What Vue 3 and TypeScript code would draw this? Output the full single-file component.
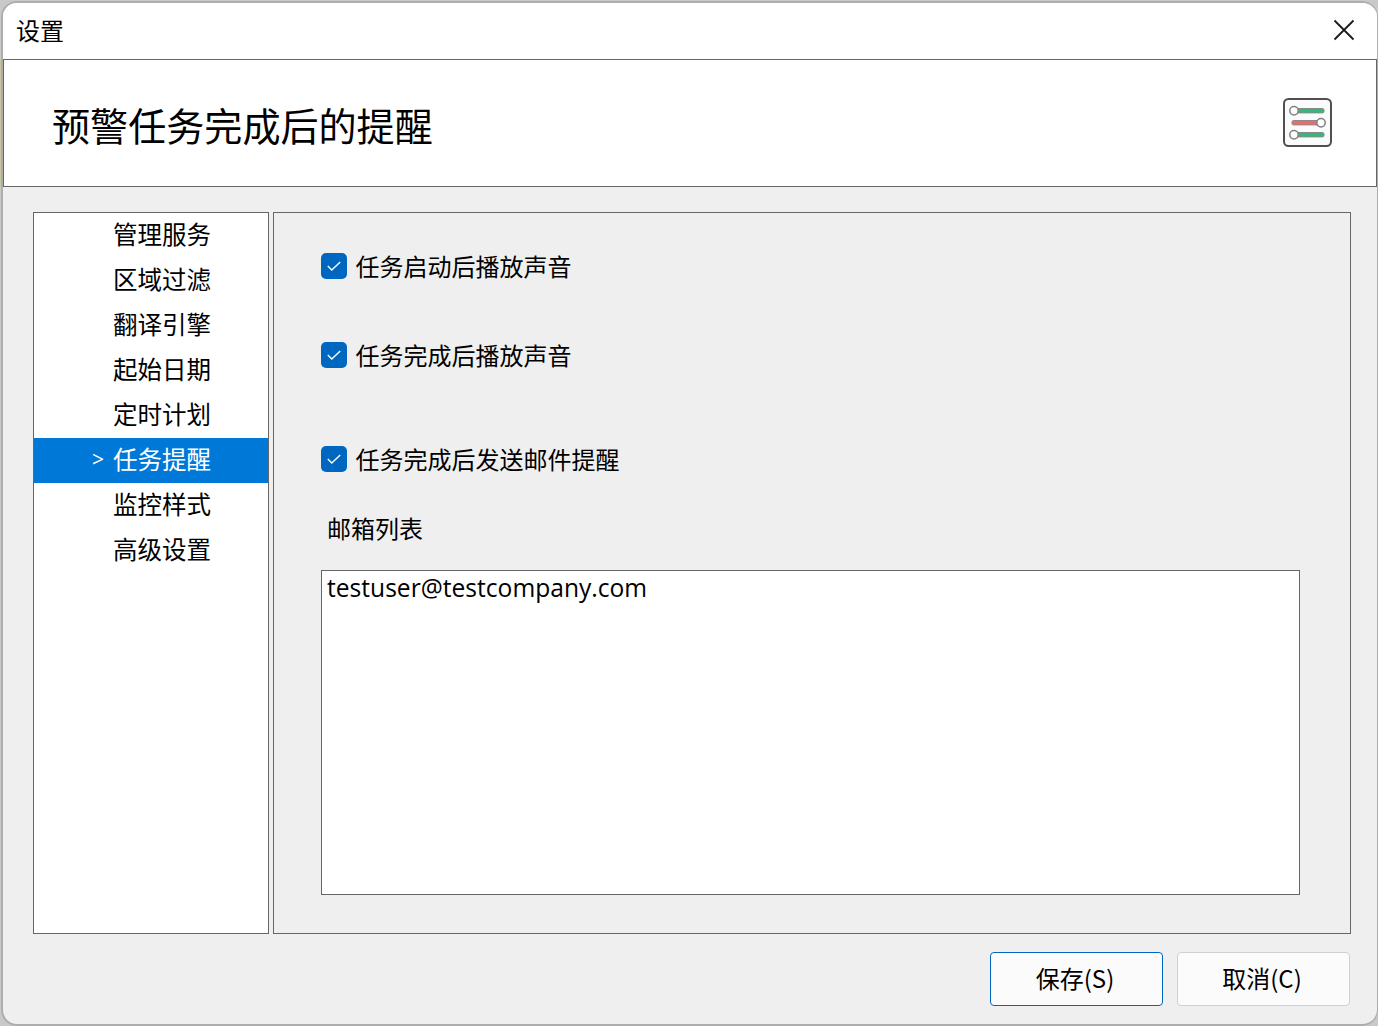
<script setup lang="ts">
const navItems: string[] = ['管理服务', '区域过滤', '翻译引擎', '起始日期', '定时计划', '任务提醒', '监控样式', '高级设置']
const activeItem = '任务提醒'
</script>

<template>
  <div class="page">
    <div class="window">
      <div class="titlebar">
        <span class="title">设置</span>
        <svg class="close" width="24" height="24" viewBox="0 0 24 24" aria-hidden="true">
          <path d="M2.5 2.5 L21.5 21.5 M21.5 2.5 L2.5 21.5" stroke="#1a1a1a" stroke-width="1.8" fill="none" />
        </svg>
      </div>
      <div class="header">
        <h1 class="heading">预警任务完成后的提醒</h1>
        <svg class="logo" width="50" height="50" viewBox="0 0 50 50" aria-hidden="true">
          <rect x="1" y="1" width="47" height="47" rx="4.5" fill="#fbfbfb" stroke="#505050" stroke-width="2" />
          <rect x="12" y="10.5" width="29" height="4.4" rx="1.5" fill="#2fbb76" stroke="#8a8a8a" stroke-width="1" />
          <circle cx="11" cy="12.7" r="4.2" fill="#fff" stroke="#808080" stroke-width="1.5" />
          <rect x="9" y="22.5" width="29" height="4.4" rx="1.5" fill="#f2686a" stroke="#8a8a8a" stroke-width="1" />
          <circle cx="38" cy="24.7" r="4.2" fill="#fff" stroke="#808080" stroke-width="1.5" />
          <rect x="12" y="34.5" width="29" height="4.4" rx="1.5" fill="#2fbb76" stroke="#8a8a8a" stroke-width="1" />
          <circle cx="11" cy="36.7" r="4.2" fill="#fff" stroke="#808080" stroke-width="1.5" />
        </svg>
      </div>
      <div class="body">
        <div class="main">
          <ul class="nav">
            <li v-for="item in navItems" :key="item" class="nav-item" :class="{ active: item === activeItem }">
              <span class="arrow">{{ item === activeItem ? '>' : '' }}</span>
              <span>{{ item }}</span>
            </li>
          </ul>
          <div class="panel">
            <label class="check first">
              <span class="box">
                <svg width="16" height="12" viewBox="0 0 16 12" aria-hidden="true"><path d="M1.8 6 L5.8 10 L14.2 2" fill="none" stroke="#fff" stroke-width="1.4" /></svg>
              </span>
              <span class="check-text">任务启动后播放声音</span>
            </label>
            <label class="check second">
              <span class="box">
                <svg width="16" height="12" viewBox="0 0 16 12" aria-hidden="true"><path d="M1.8 6 L5.8 10 L14.2 2" fill="none" stroke="#fff" stroke-width="1.4" /></svg>
              </span>
              <span class="check-text">任务完成后播放声音</span>
            </label>
            <label class="check third">
              <span class="box">
                <svg width="16" height="12" viewBox="0 0 16 12" aria-hidden="true"><path d="M1.8 6 L5.8 10 L14.2 2" fill="none" stroke="#fff" stroke-width="1.4" /></svg>
              </span>
              <span class="check-text">任务完成后发送邮件提醒</span>
            </label>
            <div class="list-label">邮箱列表</div>
            <div class="mailbox">testuser@testcompany.com</div>
          </div>
        </div>
        <div class="actions">
          <button class="btn primary" type="button">保存(S)</button>
          <button class="btn" type="button">取消(C)</button>
        </div>
      </div>
    </div>
  </div>
</template>

<style>
html, body { margin: 0; padding: 0; }
</style>

<style scoped>
.page {
  width: 1378px;
  height: 1026px;
  box-sizing: border-box;
  padding: 1px 0 0 1px;
  overflow: hidden;
  background:
    linear-gradient(#c9c59a, #c9c59a) 0 60px / 100% 126px no-repeat,
    #c9c9c9;
  font-family: "Noto Sans CJK SC", "Noto Sans", sans-serif;
  color: #000;
}
.window {
  height: 100%;
  box-sizing: border-box;
  display: flex;
  flex-direction: column;
  border: 2px solid #adadad;
  border-right-width: 1px;
  border-radius: 16px;
  overflow: hidden;
  background: #efefef;
}
.titlebar {
  height: 56px;
  flex: none;
  background: #fff;
  display: flex;
  align-items: center;
  justify-content: space-between;
  padding: 0 21px 0 13px;
}
.title { font-size: 24px; line-height: 1; position: relative; top: -1px; }
.close { display: block; position: relative; top: -1px; }
.header {
  height: 128px;
  flex: none;
  box-sizing: border-box;
  background: #fff;
  border: 1px solid #666;
  display: flex;
  align-items: center;
  justify-content: space-between;
  padding: 0 43px 0 48px;
}
.heading {
  margin: 0;
  font-size: 38.1px;
  font-weight: 400;
  line-height: 1.2;
  position: relative;
  top: 2px;
}
.logo { display: block; }
.body {
  flex: 1;
  min-height: 0;
  display: flex;
  flex-direction: column;
  padding: 25px 26px 0 30px;
}
.main {
  display: flex;
  gap: 4px;
  height: 722px;
  flex: none;
}
.nav {
  width: 236px;
  flex: none;
  box-sizing: border-box;
  margin: 0;
  padding: 0;
  list-style: none;
  background: #fff;
  border: 1px solid #666;
}
.nav-item {
  height: 45px;
  box-sizing: border-box;
  display: flex;
  align-items: center;
  padding: 0 0 4px 57px;
  font-size: 24.5px;
}
.nav-item.active {
  background: #0078d7;
  color: #fff;
}
.arrow {
  width: 22px;
  flex: none;
  text-indent: 1px;
  font-family: "Open Sans", sans-serif;
  font-size: 21px;
}
.panel {
  flex: 1;
  min-width: 0;
  box-sizing: border-box;
  border: 1px solid #666;
  padding: 40px 50px 0 47px;
}
.check {
  display: flex;
  align-items: center;
  gap: 8.5px;
  height: 26px;
  font-size: 24px;
}
.check-text { margin-bottom: 2px; }
.second { margin-top: 63px; }
.third { margin-top: 78px; }
.box {
  width: 26px;
  height: 26px;
  flex: none;
  border-radius: 5px;
  background: #0067c0;
  display: flex;
  align-items: center;
  justify-content: center;
}
.list-label {
  margin: 39px 0 0 6px;
  font-size: 24px;
  line-height: 34px;
  height: 34px;
}
.mailbox {
  margin-top: 25px;
  height: 325px;
  box-sizing: border-box;
  background: #fff;
  border: 1px solid #666;
  padding: 0 5px;
  font-family: "Open Sans", "Noto Sans", sans-serif;
  font-size: 24.6px;
  line-height: 33px;
}
.actions {
  display: flex;
  justify-content: flex-end;
  gap: 14px;
  margin: 18px 1px 0 0;
}
.btn {
  width: 173px;
  height: 54px;
  box-sizing: border-box;
  background: #fbfbfb;
  border: 1px solid #d0d0d0;
  border-radius: 4px;
  font-family: "Noto Sans CJK SC", "Noto Sans", sans-serif;
  font-size: 24px;
  color: #000;
  padding: 0 3px 4px 0;
}
.btn.primary { border-color: #0067c0; }
</style>
